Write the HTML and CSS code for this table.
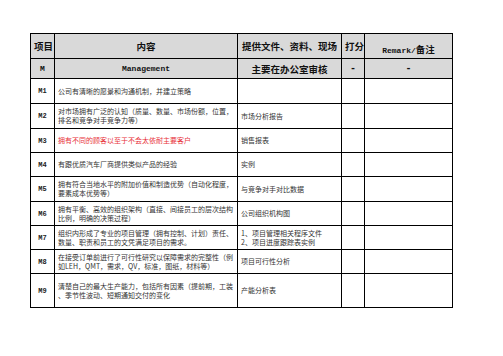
FILE: index.html
```html
<!DOCTYPE html>
<html>
<head>
    <meta charset="utf-8">
    <link rel="stylesheet" href="styles.css">
</head>
<body>
    <table class="sheet">
        <colgroup>
            <col class="c-id">
            <col class="c-item">
            <col class="c-doc">
            <col class="c-score">
            <col class="c-note">
        </colgroup>
        <tr class="head">
            <td class="cn">项目</td>
            <td class="cn">内容</td>
            <td class="cn">提供文件、资料、现场</td>
            <td class="cn">打分</td>
            <td><span class="mono">Remark/</span><span class="cn">备注</span></td>
        </tr>
        <tr class="head sub">
            <td class="mono">M</td>
            <td class="mono">Management</td>
            <td class="cn">主要在办公室审核</td>
            <td class="dash">-</td>
            <td class="dash">-</td>
        </tr>
        <tr class="r25">
            <td class="id">M1</td>
            <td class="txt">公司有清晰的愿景和沟通机制，并建立策略</td>
            <td class="txt"></td>
            <td></td>
            <td></td>
        </tr>
        <tr class="r25">
            <td class="id">M2</td>
            <td class="txt">对市场拥有广泛的认知（质量、数量、市场份额，位置，<br>排名和竞争对手竞争力等）</td>
            <td class="txt">市场分析报告</td>
            <td></td>
            <td></td>
        </tr>
        <tr class="r24">
            <td class="id">M3</td>
            <td class="txt red">拥有不同的顾客以至于不会太依耐主要客户</td>
            <td class="txt">销售报表</td>
            <td></td>
            <td></td>
        </tr>
        <tr class="r24">
            <td class="id">M4</td>
            <td class="txt">有跟优质汽车厂商提供类似产品的经验</td>
            <td class="txt">实例</td>
            <td></td>
            <td></td>
        </tr>
        <tr class="r25">
            <td class="id">M5</td>
            <td class="txt">拥有符合当地水平的附加价值和制造优势（自动化程度，<br>要素成本优势等）</td>
            <td class="txt">与竞争对手对比数据</td>
            <td></td>
            <td></td>
        </tr>
        <tr class="r24">
            <td class="id">M6</td>
            <td class="txt">拥有平衡、高效的组织架构（直接、间接员工的层次结构<br>比例，明确的决策过程）</td>
            <td class="txt">公司组织机构图</td>
            <td></td>
            <td></td>
        </tr>
        <tr class="r24">
            <td class="id">M7</td>
            <td class="txt">组织内形成了专业的项目管理（拥有控制、计划）责任、<br>数量、职责和员工的文凭满足项目的需求。</td>
            <td class="txt">1、项目管理相关程序文件<br>2、项目进度跟踪表实例</td>
            <td></td>
            <td></td>
        </tr>
        <tr class="r24">
            <td class="id">M8</td>
            <td class="txt">在接受订单前进行了可行性研究以保障需求的完整性（例<br>如LEH，QMT，需求，QV，标准，图纸，材料等）</td>
            <td class="txt">项目可行性分析</td>
            <td></td>
            <td></td>
        </tr>
        <tr class="r34">
            <td class="id">M9</td>
            <td class="txt">清楚自己的最大生产能力，包括所有因素（提前期，工装<br>、季节性波动、短期通知交付的变化</td>
            <td class="txt">产能分析表</td>
            <td></td>
            <td></td>
        </tr>
    </table>
</body>
</html>
```

FILE: styles.css
```css
body {
    margin: 0;
    padding: 33px 0 0 30px;
    background: #fff;
    font-family: "Noto Sans CJK SC", sans-serif;
}
.sheet {
    border-collapse: collapse;
    table-layout: fixed;
    width: 422px;
}
.c-id { width: 24px; }
.c-item { width: 183px; }
.c-doc { width: 104px; }
.c-score { width: 23px; }
.c-note { width: 88px; }

.sheet td {
    border: 1px solid #000;
    padding: 0 3px;
    vertical-align: middle;
    overflow: hidden;
    white-space: nowrap;
}
/* 表头两行灰色 */
.head td {
    background: #d9d9d9;
    text-align: center;
    font-weight: bold;
    color: #111;
}
.head { height: 20px; }
.cn { font-size: 9.5px; }
.mono {
    font-family: "Liberation Mono", monospace;
    font-size: 8px;
    font-weight: bold;
}
.dash {
    font-family: "Liberation Mono", monospace;
    font-size: 10px;
}
.r25 { height: 25px; }
.r24 { height: 24px; }
.r34 { height: 34px; }

.id {
    text-align: center;
    font-family: "Liberation Mono", monospace;
    font-size: 7px;
    font-weight: bold;
    color: #222;
}
.txt {
    font-size: 7px;
    line-height: 9px;
    color: #333;
}
.red { color: #e8323a; }
```
